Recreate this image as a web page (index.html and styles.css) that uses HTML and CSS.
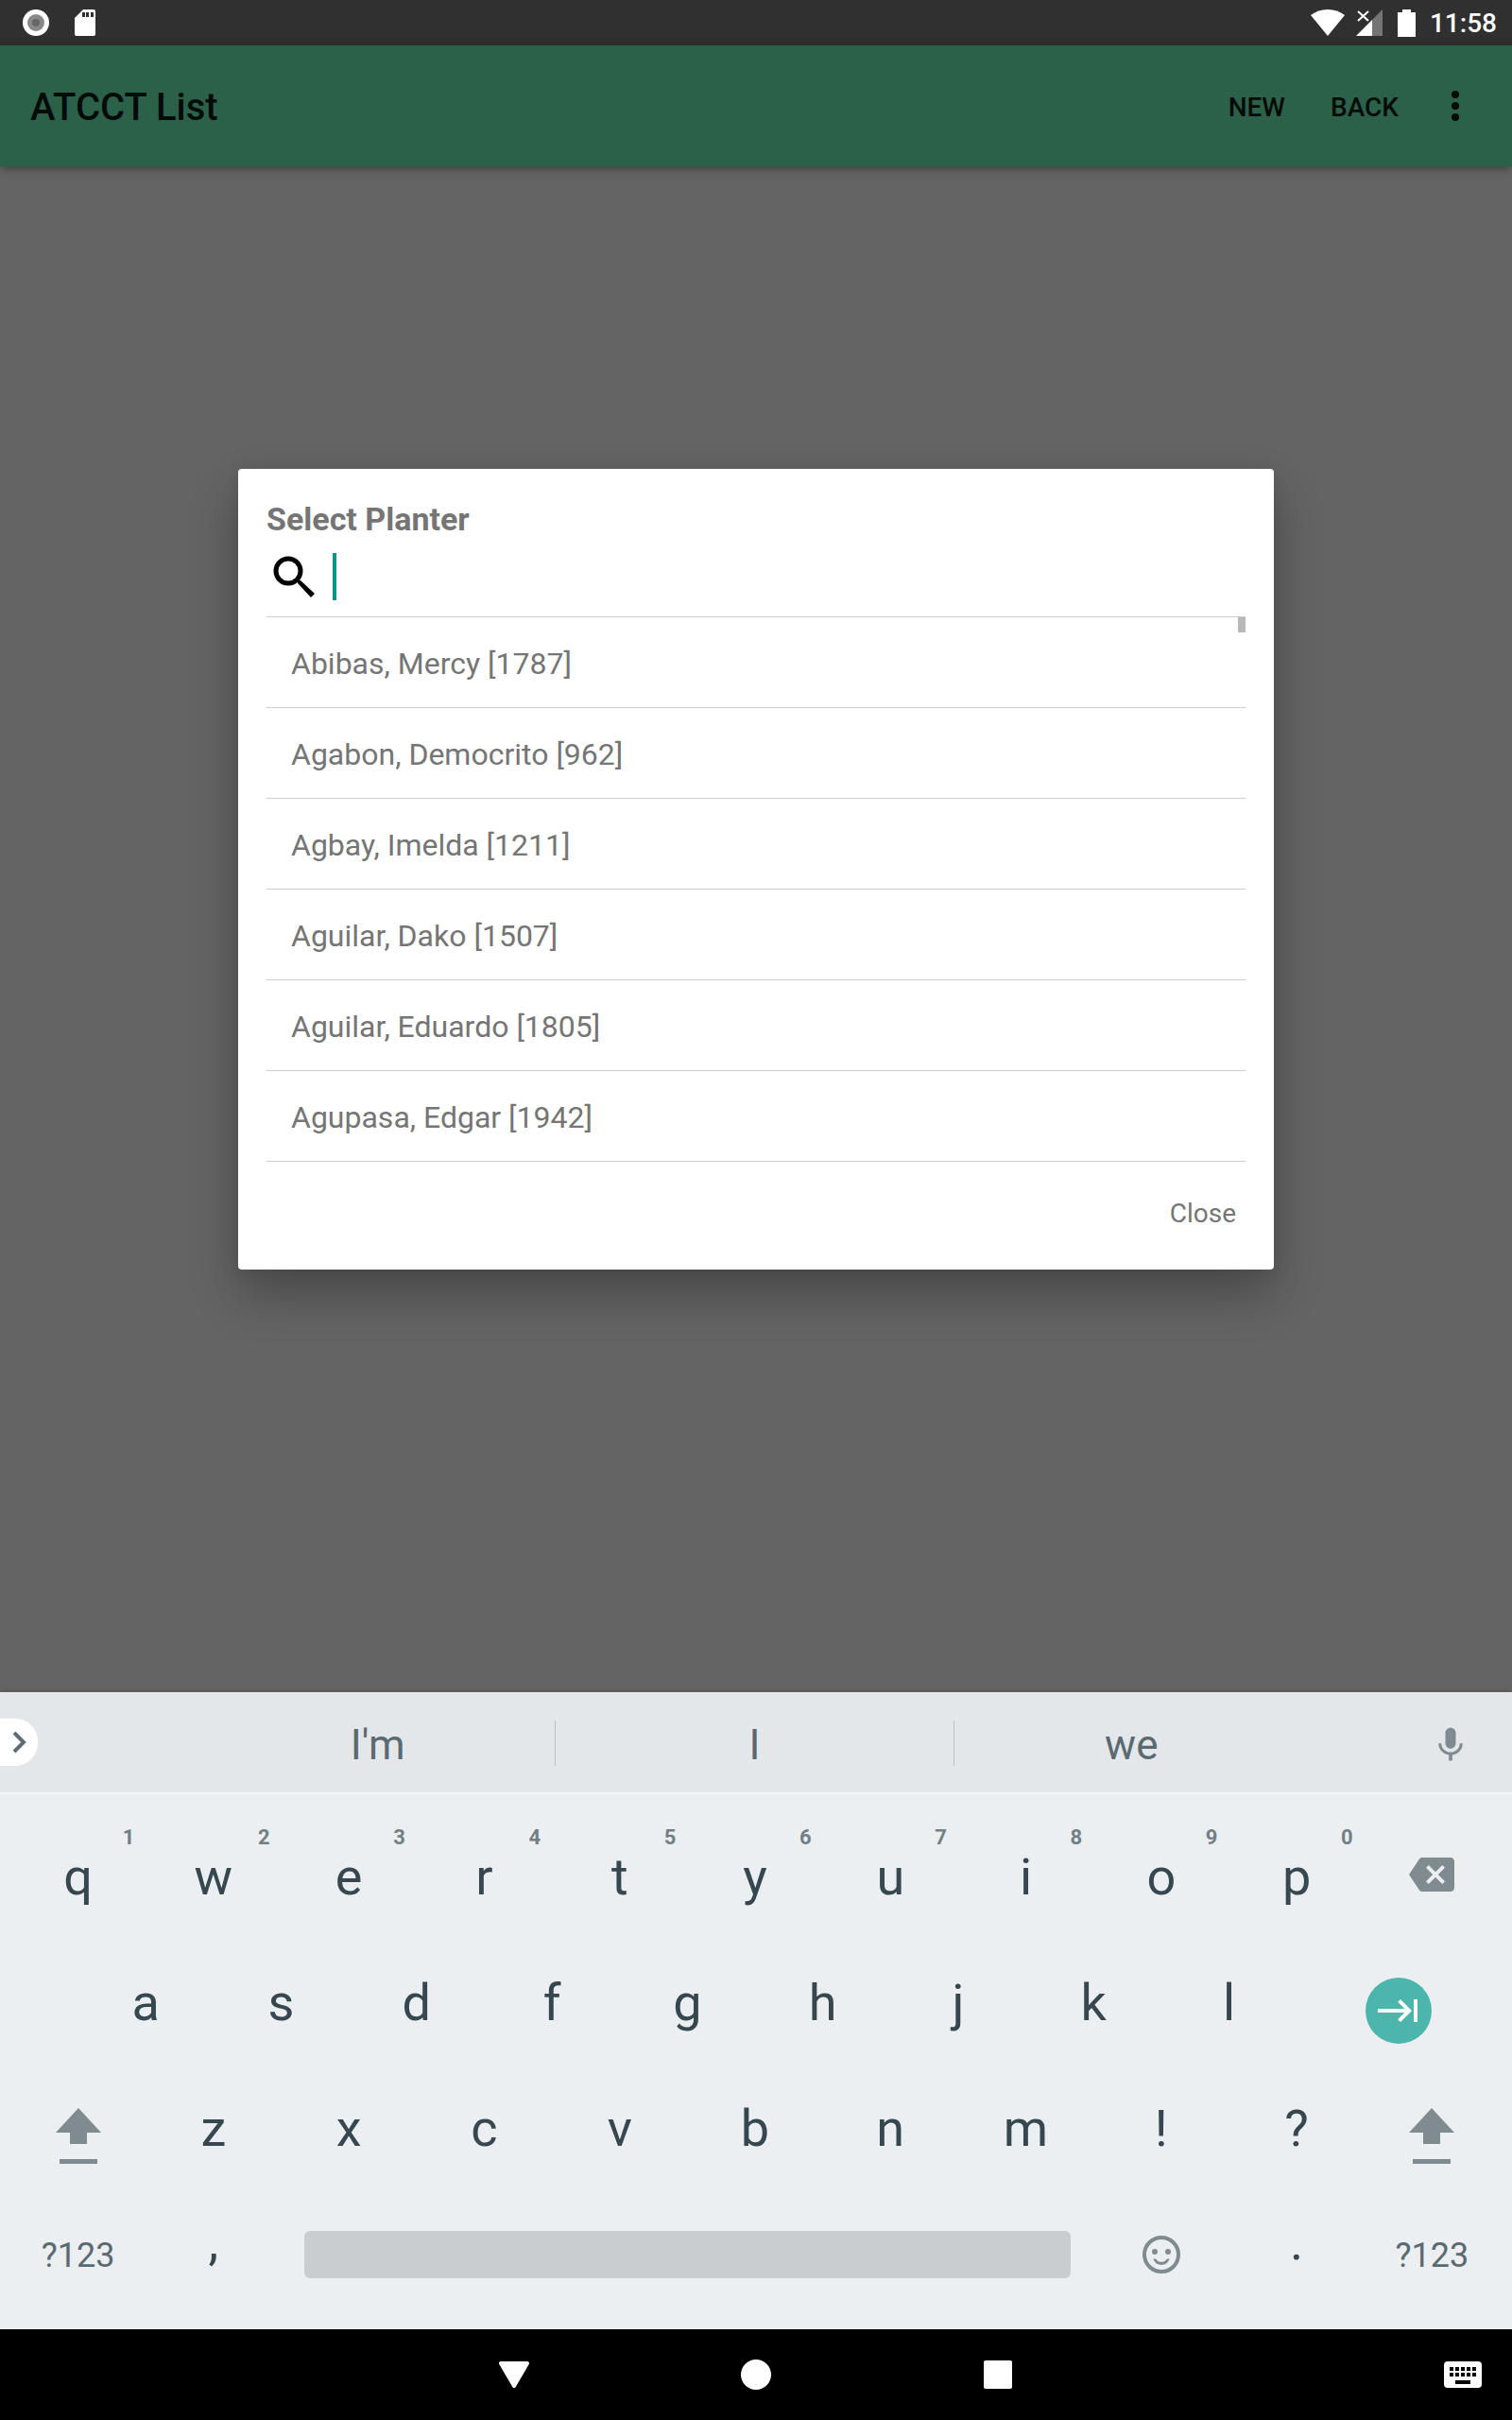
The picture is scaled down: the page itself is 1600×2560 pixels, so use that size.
FILE: index.html
```html
<!DOCTYPE html>
<html lang="en">
<head>
<meta charset="utf-8">
<meta name="viewport" content="width=device-width, initial-scale=1">
<title>ATCCT List</title>
<link rel="stylesheet" href="styles.css">
</head>
<body>
<div class="status-bar">
  <div class="status-left">
    <svg width="28" height="28" viewBox="0 0 28 28"><circle cx="14" cy="14" r="14" fill="#fff"/><circle cx="14" cy="14" r="9" fill="#888"/><circle cx="14" cy="14" r="4" fill="#666"/></svg>
    <svg width="24" height="30" viewBox="0 0 24 30"><path fill="#fff" fill-rule="evenodd" d="M10 1h11a2 2 0 0 1 2 2v24a2 2 0 0 1-2 2H3a2 2 0 0 1-2-2V10zM9 4v5h3V4zm4 0v5h3V4zm5 0v5h3V4z"/></svg>
  </div>
  <div class="status-right">
    <svg width="36" height="28" viewBox="0 0 36 28"><path fill="#fff" d="M0 6Q8 0 18 0t18 6L18 28z"/></svg>
    <svg width="28" height="28" viewBox="0 0 28 28"><path fill="#757575" d="M28 0v28H17V11z"/><path fill="#fff" d="M17 11v17H0z"/><path d="M2 2l11 10M13 2L2 12" stroke="#fff" stroke-width="2"/></svg>
    <svg class="battery" width="20" height="29" viewBox="0 0 20 29"><path fill="#fff" d="M5 0h9v3h5v26H0V3h5z"/></svg>
    <span class="clock">11:58</span>
  </div>
</div>

<div class="screen">
  <header class="app-bar">
    <h1 class="app-title">ATCCT List</h1>
    <button class="bar-action" type="button">NEW</button>
    <button class="bar-action" type="button">BACK</button>
    <button class="overflow" type="button" aria-label="More options"><svg width="8" height="32" viewBox="0 0 8 32"><g fill="#060b09"><circle cx="4" cy="4" r="4"/><circle cx="4" cy="16" r="4"/><circle cx="4" cy="28" r="4"/></g></svg></button>
  </header>
  <div class="overlay">
    <section class="dialog" role="dialog" aria-labelledby="dialog-title">
      <h2 class="dialog-title" id="dialog-title">Select Planter</h2>
      <div class="search">
        <svg width="44" height="44" viewBox="0 0 44 44"><circle cx="16" cy="16" r="13" fill="none" stroke="#000" stroke-width="5"/><path d="M27 26l2 0 15 14-4 4-14-15v-2z"/></svg>
        <span class="caret"></span>
        <input class="search-input" type="text" aria-label="Search planter">
      </div>
      <div class="planters">
        <ul class="planter-list">
          <li class="planter">Abibas, Mercy [1787]</li>
          <li class="planter">Agabon, Democrito [962]</li>
          <li class="planter">Agbay, Imelda [1211]</li>
          <li class="planter">Aguilar, Dako [1507]</li>
          <li class="planter">Aguilar, Eduardo [1805]</li>
          <li class="planter">Agupasa, Edgar [1942]</li>
        </ul>
        <span class="scroll-thumb"></span>
      </div>
      <div class="dialog-actions"><button class="close" type="button">Close</button></div>
    </section>
  </div>
</div>

<div class="keyboard">
  <div class="suggestions">
    <button class="expand" type="button" aria-label="Expand"><svg width="16" height="24" viewBox="0 0 16 24"><path d="M2 2l10 10L2 22" fill="none" stroke="#5f6e75" stroke-width="4"/></svg></button>
    <div class="words">
      <button class="word" type="button">I'm</button>
      <button class="word word-main" type="button">I</button>
      <button class="word" type="button">we</button>
    </div>
    <button class="mic" type="button" aria-label="Voice input"><svg width="44" height="44" viewBox="0 0 24 24"><path fill="#7f8b90" d="M12 14c1.66 0 2.99-1.34 2.99-3L15 5c0-1.66-1.34-3-3-3S9 3.34 9 5v6c0 1.66 1.34 3 3 3zm5.3-3c0 3-2.54 5.1-5.3 5.1S6.7 14 6.7 11H5c0 3.41 2.72 6.23 6 6.72V21h2v-3.28c3.28-.48 6-3.3 6-6.72h-1.7z"/></svg></button>
  </div>
  <div class="keys">
    <div class="key-row">
      <button class="key" type="button">q<span class="hint">1</span></button>
      <button class="key" type="button">w<span class="hint">2</span></button>
      <button class="key" type="button">e<span class="hint">3</span></button>
      <button class="key" type="button">r<span class="hint">4</span></button>
      <button class="key" type="button">t<span class="hint">5</span></button>
      <button class="key" type="button">y<span class="hint">6</span></button>
      <button class="key" type="button">u<span class="hint">7</span></button>
      <button class="key" type="button">i<span class="hint">8</span></button>
      <button class="key" type="button">o<span class="hint">9</span></button>
      <button class="key" type="button">p<span class="hint">0</span></button>
      <button class="key key-backspace" type="button" aria-label="Backspace"><svg width="48" height="48" viewBox="0 0 24 24"><path fill="#7f8b8f" d="M22 3H7c-.69 0-1.23.35-1.59.88L0 12l5.41 8.11c.36.53.9.89 1.59.89h15c1.1 0 2-.9 2-2V5c0-1.100-.9-2-2-2zm-3 12.590L17.590 17 14 13.410 10.410 17 9 15.590 12.590 12 9 8.410 10.410 7 14 10.590 17.590 7 19 8.410 15.410 12 19 15.590z"/></svg></button>
    </div>
    <div class="key-row">
      <button class="key key-first" type="button">a</button>
      <button class="key" type="button">s</button>
      <button class="key" type="button">d</button>
      <button class="key" type="button">f</button>
      <button class="key" type="button">g</button>
      <button class="key" type="button">h</button>
      <button class="key" type="button">j</button>
      <button class="key" type="button">k</button>
      <button class="key" type="button">l</button>
      <button class="key key-next" type="button" aria-label="Next"><span class="next-disc"><svg width="48" height="48" viewBox="0 0 24 24"><path fill="#fff" d="M11.590 7.410L15.170 11H1v2h14.170l-3.590 3.590L13 18l6-6-6-6-1.410 1.410zM20 6v12h2V6h-2z"/></svg></span></button>
    </div>
    <div class="key-row">
      <button class="key key-shift" type="button" aria-label="Shift"><svg width="48" height="60" viewBox="0 0 48 60"><path fill="#7f8b8f" d="M24 0l24 26H33v12H15V26H0zM4 54h40v5H4z"/></svg></button>
      <button class="key" type="button">z</button>
      <button class="key" type="button">x</button>
      <button class="key" type="button">c</button>
      <button class="key" type="button">v</button>
      <button class="key" type="button">b</button>
      <button class="key" type="button">n</button>
      <button class="key" type="button">m</button>
      <button class="key" type="button">!</button>
      <button class="key" type="button">?</button>
      <button class="key key-shift" type="button" aria-label="Shift"><svg width="48" height="60" viewBox="0 0 48 60"><path fill="#7f8b8f" d="M24 0l24 26H33v12H15V26H0zM4 54h40v5H4z"/></svg></button>
    </div>
    <div class="key-row">
      <button class="key key-mode" type="button">?123</button>
      <button class="key key-punct" type="button">,</button>
      <button class="key key-space" type="button" aria-label="Space"><span class="space-bar"></span></button>
      <button class="key" type="button" aria-label="Emoji"><svg width="48" height="48" viewBox="0 0 24 24"><circle cx="12" cy="12" r="9" fill="none" stroke="#7f8b8f" stroke-width="2"/><g fill="#7f8b8f"><circle cx="8.500" cy="10.500" r="1.500"/><circle cx="15.500" cy="10.500" r="1.500"/><path d="M7.700 14.300c.6 2 2.300 3.200 4.300 3.200s3.700-1.200 4.300-3.200l-1.400-.1c-.6 1.100-1.600 1.700-2.900 1.700s-2.300-.6-2.900-1.700z"/></g></svg></button>
      <button class="key key-punct" type="button">.</button>
      <button class="key key-mode" type="button">?123</button>
    </div>
  </div>
</div>

<nav class="nav-bar">
  <div class="nav-main">
    <button class="nav-button" type="button" aria-label="Back"><svg width="32" height="28" viewBox="0 0 32 28"><path d="M2 2h28L16 26z" fill="#fff" stroke="#fff" stroke-width="4" stroke-linejoin="round"/></svg></button>
    <button class="nav-button" type="button" aria-label="Home"><svg width="32" height="32" viewBox="0 0 32 32"><circle cx="16" cy="16" r="16" fill="#fff"/></svg></button>
    <button class="nav-button" type="button" aria-label="Recents"><svg width="30" height="30" viewBox="0 0 30 30"><rect width="30" height="30" rx="2" fill="#fff"/></svg></button>
  </div>
  <button class="nav-keyboard" type="button" aria-label="Choose keyboard"><svg width="40" height="28" viewBox="0 0 40 28"><rect width="40" height="28" rx="4" fill="#fff"/><path d="M6 8h28M6 14h28" stroke="#000" stroke-width="4" stroke-dasharray="4 2"/><path d="M12 20h16v4H12z"/></svg></button>
</nav>
</body>
</html>
```
FILE: styles.css
```css
* { box-sizing: border-box; }

body {
  margin: 0;
  min-height: 100vh;
  display: flex;
  flex-direction: column;
  background: #646464;
  font-family: Roboto, "Noto Sans", sans-serif;
}

svg { display: block; flex: none; }

button {
  padding: 0;
  border: 0;
  background: none;
  color: inherit;
  font: inherit;
}

/* Status bar */
.status-bar {
  display: flex;
  justify-content: space-between;
  align-items: center;
  height: 48px;
  padding: 0 16px 0 24px;
  background: #303030;
  color: #fff;
}
.status-left { display: flex; align-items: center; gap: 26px; }
.status-right { display: flex; align-items: center; gap: 12px; }
.battery { margin: 0 2px 0 4px; }
.clock { padding-top: 2px; font-size: 28px; font-weight: 500; line-height: 32px; }

/* App screen */
.screen {
  position: relative;
  flex: 1;
  min-height: 1000px;
}
.app-bar {
  display: flex;
  align-items: center;
  height: 128px;
  padding: 0 24px 0 32px;
  background: #2c6149;
  box-shadow: 0 2px 10px rgba(0, 0, 0, .4);
  color: #060b09;
}
.app-title {
  flex: 1;
  margin: 0;
  padding-top: 4px;
  font-size: 40px;
  font-weight: 500;
  line-height: 48px;
}
.bar-action {
  padding: 4px 24px 0;
  font-size: 28px;
  font-weight: 500;
  line-height: 48px;
}
.overflow {
  display: flex;
  justify-content: center;
  width: 72px;
}

/* Dialog */
.overlay {
  position: absolute;
  inset: 0;
  display: flex;
  justify-content: center;
  align-items: center;
  padding: 32px;
}
.dialog {
  width: 100%;
  max-width: 1096px;
  padding: 30px;
  border-radius: 4px;
  background: #fff;
  box-shadow: 0 26px 50px rgba(0, 0, 0, .28), 0 0 16px rgba(0, 0, 0, .08);
  color: #757575;
}
.dialog-title {
  margin: 0;
  font-size: 34px;
  font-weight: 700;
  line-height: 46px;
}
.search {
  display: flex;
  align-items: center;
  height: 80px;
  padding: 0 7px 4px;
}
.caret {
  width: 4px;
  height: 50px;
  margin-left: 19px;
  background: #009688;
}
.search-input {
  flex: 1;
  min-width: 0;
  border: 0;
  outline: 0;
  background: none;
  color: #212121;
  font: 400 36px/48px Roboto, sans-serif;
}
.planters { position: relative; border-top: 1px solid #ccc; }
.planter-list { margin: 0; padding: 0; list-style: none; }
.planter {
  height: 96px;
  padding: 0 26px;
  border-bottom: 1px solid #ccc;
  font-size: 32px;
  line-height: 98px;
}
.scroll-thumb {
  position: absolute;
  top: 0;
  right: 0;
  width: 8px;
  height: 16px;
  background: #b8b8b8;
}
.dialog-actions {
  display: flex;
  justify-content: flex-end;
  padding: 31px 10px 5px;
}
.close { font-size: 28px; line-height: 48px; }

/* Keyboard */
.keyboard {
  position: relative;
  background: #ebeff2;
  box-shadow: 0 0 4px rgba(0, 0, 0, .3);
}
.suggestions {
  display: flex;
  align-items: center;
  justify-content: space-between;
  height: 108px;
  border-bottom: 2px solid #f5f7f9;
  background: #e3e7ea;
  color: #5b6970;
}
.expand {
  display: flex;
  align-items: center;
  width: 40px;
  height: 50px;
  padding-left: 13px;
  border-radius: 0 24px 24px 0;
  background: #fff;
}
.words {
  display: grid;
  grid-template-columns: 8fr 9fr 8fr;
  flex: 1;
  margin: 0 128px 0 172px;
  padding-top: 2px;
}
.word {
  height: 48px;
  padding-top: 4px;
  font-size: 44px;
  line-height: 44px;
}
.word-main { border: solid #bcc3c6; border-width: 0 1px; }
.mic { padding: 5px 43px 0 0; }

.keys { padding: 21px 13px 13px 11px; }
.key-row {
  display: grid;
  grid-template-columns: repeat(22, 1fr);
  height: 133px;
}
.key {
  position: relative;
  display: flex;
  align-items: center;
  justify-content: center;
  grid-column: span 2;
  color: #37474f;
  font-size: 54px;
  line-height: 64px;
}
.key-first { grid-column: 2 / span 2; }
.hint {
  position: absolute;
  top: 12px;
  right: 12px;
  color: #737f84;
  font-size: 22px;
  font-weight: 700;
  line-height: 26px;
}
.key-backspace { padding-bottom: 5px; }
.key-next { grid-column: span 3; padding-top: 16px; }
.next-disc {
  display: flex;
  align-items: center;
  justify-content: center;
  width: 70px;
  height: 70px;
  border-radius: 50%;
  background: #4db6ac;
}
.key-shift { padding-top: 16px; }
.key-mode { padding-top: 2px; color: #5b6970; font-size: 36px; }
.key-punct { padding-bottom: 26px; }
.key-space { grid-column: span 12; padding: 0 24px; }
.space-bar {
  flex: 1;
  height: 50px;
  border-radius: 6px;
  background: #c9cdd0;
}

/* Navigation bar */
.nav-bar {
  display: grid;
  grid-template-columns: 1fr auto 1fr;
  align-items: center;
  height: 96px;
  background: #000;
}
.nav-main { display: flex; grid-column: 2; }
.nav-button {
  display: flex;
  justify-content: center;
  align-items: center;
  width: 256px;
  height: 96px;
}
.nav-keyboard { justify-self: end; padding-right: 32px; }
```
